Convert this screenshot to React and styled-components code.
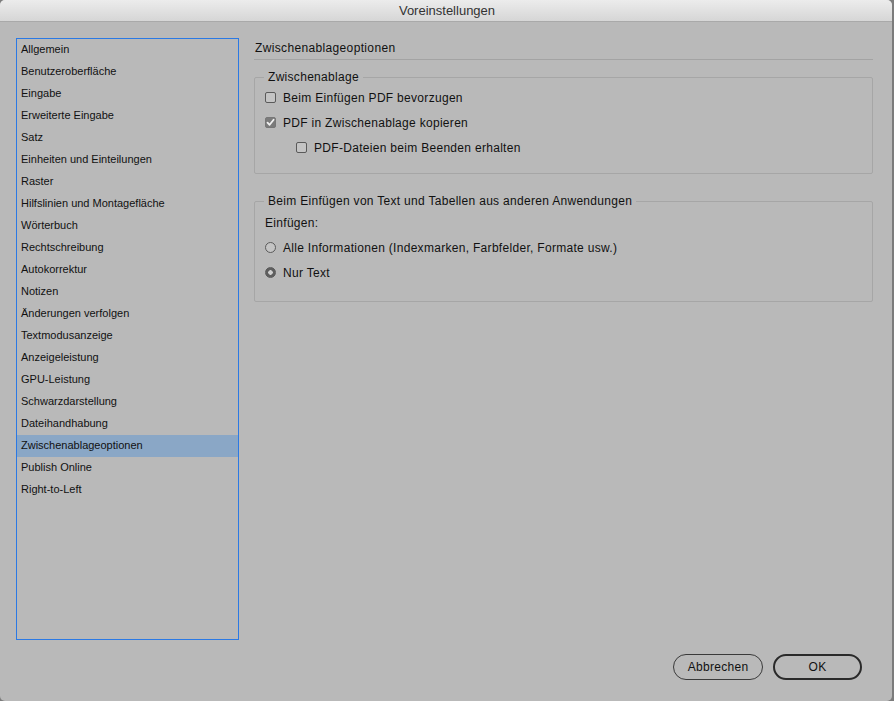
import React, { useState } from 'react'
import styled, { createGlobalStyle } from 'styled-components'

const GlobalStyle = createGlobalStyle`
  html, body {
    margin: 0;
    padding: 0;
    background: #7c7c7c;
  }
  body {
    font-family: "Liberation Sans", Arial, sans-serif;
    color: #111;
  }
`

const categories = [
  'Allgemein',
  'Benutzeroberfläche',
  'Eingabe',
  'Erweiterte Eingabe',
  'Satz',
  'Einheiten und Einteilungen',
  'Raster',
  'Hilfslinien und Montagefläche',
  'Wörterbuch',
  'Rechtschreibung',
  'Autokorrektur',
  'Notizen',
  'Änderungen verfolgen',
  'Textmodusanzeige',
  'Anzeigeleistung',
  'GPU-Leistung',
  'Schwarzdarstellung',
  'Dateihandhabung',
  'Zwischenablageoptionen',
  'Publish Online',
  'Right-to-Left',
]

function Checkbox({ checked }) {
  return (
    <Box $checked={checked}>
      {checked && (
        <svg width="9" height="9" viewBox="0 0 9 9">
          <path d="M1.5 4.6 L3.6 6.8 L7.6 1.8" fill="none" stroke="#f2f2f2" strokeWidth="1.8" strokeLinecap="round" strokeLinejoin="round" />
        </svg>
      )}
    </Box>
  )
}

function App() {
  const [selected, setSelected] = useState('Zwischenablageoptionen')

  return (
    <>
      <GlobalStyle />
      <Window>
        <TitleBar>Voreinstellungen</TitleBar>
        <Main>
          <Sidebar>
            {categories.map((c) => (
              <SidebarItem key={c} $active={c === selected} onClick={() => setSelected(c)}>
                {c}
              </SidebarItem>
            ))}
          </Sidebar>
          <Content>
            <Heading>Zwischenablageoptionen</Heading>
            <Group>
              <Legend>Zwischenablage</Legend>
              <Option>
                <Checkbox />
                Beim Einfügen PDF bevorzugen
              </Option>
              <Option>
                <Checkbox checked />
                PDF in Zwischenablage kopieren
              </Option>
              <Option $indent>
                <Checkbox />
                PDF-Dateien beim Beenden erhalten
              </Option>
            </Group>
            <Group $second>
              <Legend>Beim Einfügen von Text und Tabellen aus anderen Anwendungen</Legend>
              <Label>Einfügen:</Label>
              <Option>
                <Radio />
                Alle Informationen (Indexmarken, Farbfelder, Formate usw.)
              </Option>
              <Option>
                <Radio $checked />
                Nur Text
              </Option>
            </Group>
          </Content>
        </Main>
        <Footer>
          <Button>Abbrechen</Button>
          <Button $primary>OK</Button>
        </Footer>
      </Window>
    </>
  )
}

export default App

const Window = styled.div`
  width: 892px;
  height: 701px;
  background: #b9b9b9;
  border-radius: 5px;
  display: flex;
  flex-direction: column;
  overflow: hidden;
`

const TitleBar = styled.div`
  height: 22px;
  box-sizing: border-box;
  border-bottom: 1px solid #a9a9a9;
  background: linear-gradient(#ececec, #d6d6d6);
  font-size: 13px;
  color: #333;
  display: flex;
  align-items: center;
  justify-content: center;
  padding-left: 2px;
`

const Main = styled.div`
  flex: 1;
  display: grid;
  grid-template-columns: 223px 1fr;
  column-gap: 15px;
  padding: 16px 19px 0 16px;
  min-height: 0;
`

const Sidebar = styled.div`
  border: 1px solid #2b79e4;
  display: flex;
  flex-direction: column;
`

const SidebarItem = styled.div`
  height: 22px;
  line-height: 21px;
  padding-left: 4px;
  font-size: 11px;
  color: #111;
  background: ${(p) => (p.$active ? '#8aa7c6' : 'transparent')};
  cursor: default;
`

const Content = styled.div`
  display: flex;
  flex-direction: column;
`

const Heading = styled.div`
  height: 21px;
  line-height: 21px;
  font-size: 12px;
  letter-spacing: 0.35px;
  padding-left: 1px;
  border-bottom: 1px solid #a3a3a3;
  margin-bottom: 9px;
`

const Group = styled.fieldset`
  margin: ${(p) => (p.$second ? '19px 0 0' : '0')};
  padding: 0 10px ${(p) => (p.$second ? '16px' : '13px')};
  border: 1px solid #a6a6a6;
  border-radius: 2px;
  min-width: 0;
  font-size: 12px;
  letter-spacing: 0.3px;
`

const Legend = styled.legend`
  margin-left: -1px;
  padding: 0 4px;
  line-height: 16px;
  font-size: 12px;
`

const Label = styled.div`
  margin-top: 2px;
  height: 24px;
  line-height: 24px;
`

const Option = styled.div`
  height: 25px;
  display: flex;
  align-items: center;
  gap: 7px;
  padding-left: ${(p) => (p.$indent ? '31px' : '0')};
`

const Box = styled.span`
  width: 11px;
  height: 11px;
  box-sizing: border-box;
  border-radius: 2px;
  border: 1px solid ${(p) => (p.$checked ? '#777' : '#5a5a5a')};
  background: ${(p) => (p.$checked ? '#7b7b7b' : '#c4c4c4')};
  display: flex;
  align-items: center;
  justify-content: center;
  flex-shrink: 0;
`

const Radio = styled.span`
  width: 11px;
  height: 11px;
  box-sizing: border-box;
  border-radius: 50%;
  border: 1px solid #5a5a5a;
  background: ${(p) => (p.$checked ? 'radial-gradient(circle, #cfcfcf 0 2px, #5e5e5e 2.5px)' : '#c4c4c4')};
  flex-shrink: 0;
`

const Footer = styled.div`
  display: flex;
  justify-content: flex-end;
  gap: 10px;
  padding: 14px 30px 21px 0;
`

const Button = styled.button`
  width: ${(p) => (p.$primary ? '89px' : '90px')};
  height: 26px;
  box-sizing: border-box;
  border-radius: 13px;
  border: ${(p) => (p.$primary ? '2px solid #2a2a2a' : '1px solid #3a3a3a')};
  background: transparent;
  font-family: "Liberation Sans", Arial, sans-serif;
  font-size: 12px;
  letter-spacing: 0.3px;
  color: #111;
  padding: 0;
`
